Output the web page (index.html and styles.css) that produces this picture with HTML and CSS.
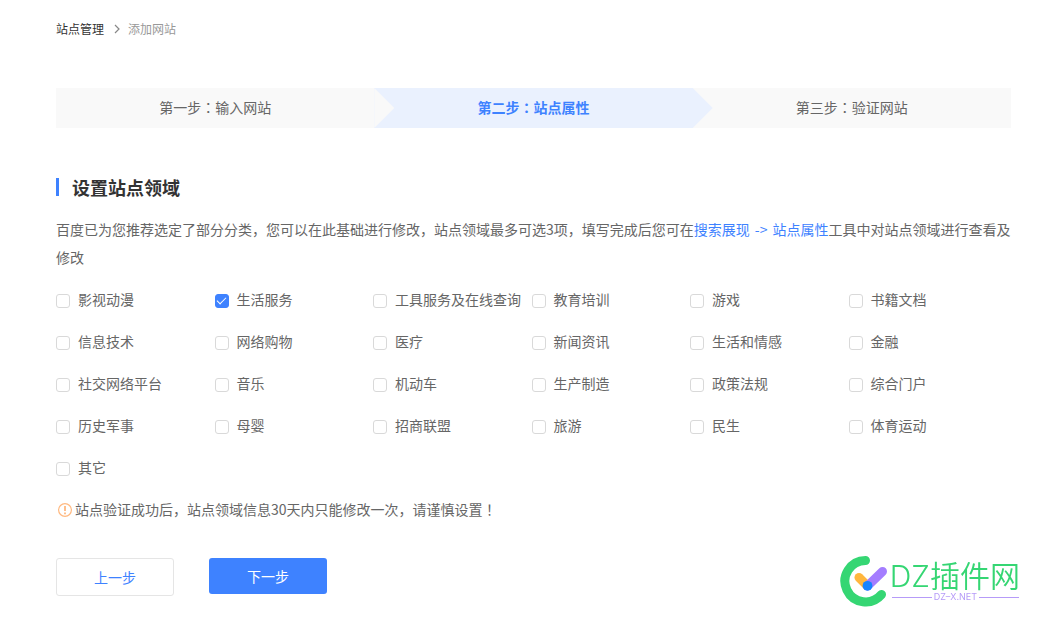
FILE: index.html
```html
<!DOCTYPE html>
<html lang="zh-CN">
<head>
<meta charset="utf-8">
<meta name="viewport" content="width=device-width, initial-scale=1">
<title>添加网站</title>
<link rel="stylesheet" href="styles.css">
</head>
<body>
<main class="page">
  <nav class="crumbs">
    <a class="crumb-link" href="#">站点管理</a>
    <svg class="crumb-arrow" viewBox="0 0 6 10" aria-hidden="true"><path d="M1 1l4 4-4 4"/></svg>
    <span>添加网站</span>
  </nav>

  <ol class="steps">
    <li class="step">第一步<span lang="zh-TW">：</span>输入网站</li>
    <li class="step step-active">第二步<span lang="zh-TW">：</span>站点属性</li>
    <li class="step">第三步<span lang="zh-TW">：</span>验证网站</li>
  </ol>

  <h1 class="title">设置站点领域</h1>
  <p class="intro">百度已为您推荐选定了部分分类，您可以在此基础进行修改，站点领域最多可选3项，填写完成后您可在<a class="link" href="#">搜索展现<span class="to">-&gt;</span>站点属性</a>工具中对站点领域进行查看及修改</p>

  <form class="form">
    <div class="fields">
      <label class="field"><input class="box" type="checkbox">影视动漫</label>
      <label class="field"><input class="box" type="checkbox" checked>生活服务</label>
      <label class="field"><input class="box" type="checkbox">工具服务及在线查询</label>
      <label class="field"><input class="box" type="checkbox">教育培训</label>
      <label class="field"><input class="box" type="checkbox">游戏</label>
      <label class="field"><input class="box" type="checkbox">书籍文档</label>
      <label class="field"><input class="box" type="checkbox">信息技术</label>
      <label class="field"><input class="box" type="checkbox">网络购物</label>
      <label class="field"><input class="box" type="checkbox">医疗</label>
      <label class="field"><input class="box" type="checkbox">新闻资讯</label>
      <label class="field"><input class="box" type="checkbox">生活和情感</label>
      <label class="field"><input class="box" type="checkbox">金融</label>
      <label class="field"><input class="box" type="checkbox">社交网络平台</label>
      <label class="field"><input class="box" type="checkbox">音乐</label>
      <label class="field"><input class="box" type="checkbox">机动车</label>
      <label class="field"><input class="box" type="checkbox">生产制造</label>
      <label class="field"><input class="box" type="checkbox">政策法规</label>
      <label class="field"><input class="box" type="checkbox">综合门户</label>
      <label class="field"><input class="box" type="checkbox">历史军事</label>
      <label class="field"><input class="box" type="checkbox">母婴</label>
      <label class="field"><input class="box" type="checkbox">招商联盟</label>
      <label class="field"><input class="box" type="checkbox">旅游</label>
      <label class="field"><input class="box" type="checkbox">民生</label>
      <label class="field"><input class="box" type="checkbox">体育运动</label>
      <label class="field"><input class="box" type="checkbox">其它</label>
    </div>

    <p class="notice">
      <svg class="notice-icon" viewBox="0 0 14 14" aria-hidden="true"><circle cx="7" cy="7" r="6.4"/><path d="M7 3v5M7 9.600v1.600"/></svg>
      <span>站点验证成功后，站点领域信息30天内只能修改一次，请谨慎设置<span lang="zh-TW">！</span></span>
    </p>

    <div class="actions">
      <button class="btn" type="button">上一步</button>
      <button class="btn btn-primary" type="button">下一步</button>
    </div>
  </form>
</main>

<aside class="brand">
  <svg class="brand-mark" viewBox="0 0 50 52" aria-hidden="true">
    <path class="mark-ring" d="M25.500 5.500A20.700 20.700 0 1 0 41.500 39.500"/>
    <path class="mark-short" d="M19 22.500L27 30.500"/>
    <path class="mark-long" d="M42.500 16.500L27.500 31"/>
    <circle class="mark-dot" cx="27.500" cy="30.800" r="4.900"/>
  </svg>
  <div class="brand-text">
    <div class="brand-name">DZ插件网</div>
    <div class="brand-site">DZ–X.NET</div>
  </div>
</aside>
</body>
</html>
```
FILE: styles.css
```css
* {
  box-sizing: border-box;
}

body {
  margin: 0;
  background: #fff;
  color: #666;
  font: 14px/28px "Noto Sans CJK SC", sans-serif;
}

.page {
  padding: 19px 27px 24px 56px;
}

.crumbs {
  display: flex;
  align-items: center;
  font-size: 12px;
  line-height: 20px;
  color: #999;
}

.crumb-link {
  color: #333;
  text-decoration: none;
}

.crumb-arrow {
  width: 6px;
  height: 10px;
  margin: 0 8px 0 10px;
  fill: none;
  stroke: #888;
  stroke-width: 1.200;
}

.steps {
  display: grid;
  grid-template-columns: repeat(3, 1fr);
  margin: 49px 1px 0 0;
  padding: 0;
  list-style: none;
  background: #f9f9f9;
}

.step {
  padding-bottom: 2px;
  line-height: 38px;
  text-align: center;
}

.step-active {
  position: relative;
  background: #eaf1fe;
  color: #3e82ff;
  font-weight: 700;
}

.step-active::before,
.step-active::after {
  content: "";
  position: absolute;
  top: 0;
  width: 20px;
  height: 40px;
  clip-path: polygon(0 0, 100% 50%, 0 100%);
}

.step-active::before {
  left: 0;
  background: #f9f9f9;
}

.step-active::after {
  left: 100%;
  background: #eaf1fe;
}

.title {
  display: flex;
  align-items: center;
  gap: 13px;
  margin: 45px 0 0;
  font-size: 18px;
  line-height: 28px;
  color: #333;
}

.title::before {
  content: "";
  width: 3px;
  height: 18px;
  background: #3e82ff;
}

.intro {
  margin: 14px 0 0;
}

.link {
  color: #3e82ff;
  text-decoration: none;
}

.to {
  margin: 0 5px;
}

.fields {
  display: grid;
  grid-template-columns: repeat(6, 1fr);
  row-gap: 14px;
  margin: 14px 5px 0 0;
}

.field {
  display: flex;
  align-items: center;
  gap: 8px;
  white-space: nowrap;
}

.box {
  appearance: none;
  display: grid;
  place-items: center;
  width: 14px;
  height: 14px;
  margin: 3px 0 0;
  border: 1px solid #d9d9d9;
  border-radius: 3px;
  background: #fff;
}

.box:checked {
  border-color: #3e82ff;
  background: #3e82ff;
}

.box:checked::before {
  content: "";
  width: 8px;
  height: 4px;
  margin-bottom: 3px;
  border: solid #fff;
  border-width: 0 0 1px 1px;
  transform: rotate(-45deg);
}

.notice {
  display: flex;
  align-items: center;
  gap: 3px;
  margin: 14px 0 0 2px;
}

.notice-icon {
  width: 14px;
  height: 14px;
  margin-top: 2px;
  fill: none;
  stroke: #ffb980;
  stroke-width: 1.200;
}

.notice-icon path {
  stroke-width: 1.800;
}

.actions {
  display: flex;
  align-items: flex-start;
  gap: 35px;
  margin-top: 35px;
}

.btn {
  width: 118px;
  padding: 0;
  border: 1px solid #e5e5e5;
  border-radius: 3px;
  background: #fff;
  color: #3e82ff;
  font: inherit;
  line-height: 36px;
}

.btn-primary {
  border: 0;
  background: #3e82ff;
  color: #fff;
}

.brand {
  position: fixed;
  right: 19px;
  bottom: 14px;
  display: flex;
  align-items: center;
}

.brand-mark {
  width: 50px;
  height: 52px;
  fill: none;
  stroke-width: 9;
  stroke-linecap: round;
}

.mark-ring {
  stroke: #35d673;
}

.mark-short {
  stroke: #ffb63e;
}

.mark-long {
  stroke: #a47dff;
}

.mark-dot {
  fill: #1684ff;
}

.brand-name {
  color: #35d673;
  font: 350 30px/32px Inter, "Noto Sans CJK SC", sans-serif;
}

.brand-site {
  display: flex;
  align-items: center;
  gap: 2px;
  margin: 0 1px 0 2px;
  color: #b69bf8;
  font: 9px/10px Inter, sans-serif;
}

.brand-site::before,
.brand-site::after {
  content: "";
  flex: 1;
  height: 1px;
  background: #b69bf8;
}
```
